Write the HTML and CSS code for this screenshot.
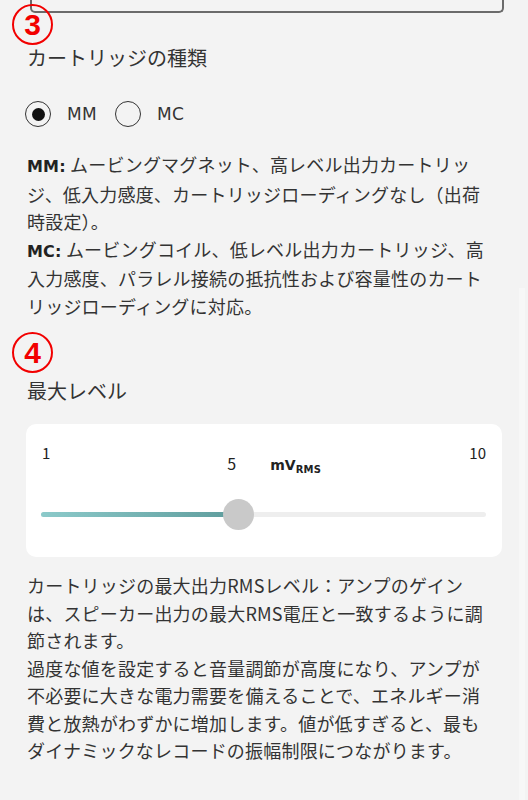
FILE: index.html
```html
<!DOCTYPE html>
<html lang="ja">
<head>
<meta charset="utf-8">
<link rel="stylesheet" href="styles.css">
</head>
<body>
<div class="page">
  <div class="top-box"></div>
  <span class="badge badge-3">3</span>

  <h2 class="heading h-type">カートリッジの種類</h2>
  <div class="radios">
    <label class="radio"><span class="dot checked"></span><span class="radio-label">MM</span></label>
    <label class="radio"><span class="dot"></span><span class="radio-label">MC</span></label>
  </div>
  <p class="para p1"><b>MM:</b> ムービングマグネット、高レベル出力カートリッ<br>ジ、低入力感度、カートリッジローディングなし（出荷<br>時設定）。<br><b>MC:</b> ムービングコイル、低レベル出力カートリッジ、高<br>入力感度、パラレル接続の抵抗性および容量性のカート<br>リッジローディングに対応。</p>

  <div class="sec4">
    <span class="badge badge-4">4</span>
    <h2 class="heading h-level">最大レベル</h2>
  </div>
  <div class="card">
    <div class="labels">
      <span class="min">1</span>
      <span class="value"><span class="num">5</span><span class="unit">mV<sub>RMS</sub></span></span>
      <span class="max">10</span>
    </div>
    <div class="slider">
      <div class="track">
        <div class="fill" style="width:44.4%"></div>
        <div class="thumb" style="left:44.4%"></div>
      </div>
    </div>
  </div>
  <p class="para p2">カートリッジの最大出力RMSレベル：アンプのゲイン<br>は、スピーカー出力の最大RMS電圧と一致するように調<br>節されます。<br>過度な値を設定すると音量調節が高度になり、アンプが<br>不必要に大きな電力需要を備えることで、エネルギー消<br>費と放熱がわずかに増加します。値が低すぎると、最も<br>ダイナミックなレコードの振幅制限につながります。</p>
  <div class="scroll-strip"></div>
</div>
</body>
</html>
```

FILE: styles.css
```css
html, body {
  margin: 0;
  padding: 0;
  background: #f3f3f3;
}
body {
  font-family: "Noto Sans CJK JP", "Noto Sans", sans-serif;
  color: #333;
  width: 528px;
  height: 800px;
  overflow: hidden;
}
.page {
  position: relative;
  padding: 0 26px 0 27px;
}
.top-box {
  margin-left: 3px;
  margin-right: -2px;
  height: 11px;
  border: 2px solid #6b6b6b;
  border-top: none;
  border-radius: 0 0 5px 5px;
}
.badge {
  position: absolute;
  left: 12px;
  width: 37px;
  height: 37px;
  border: 2.5px solid #f20000;
  border-radius: 50%;
  color: #f20000;
  font-family: "Liberation Sans", Arial, sans-serif;
  font-weight: bold;
  font-size: 30px;
  line-height: 37px;
  text-align: center;
}
.badge-3 { top: 4px; }
.badge-4 { top: -45px; left: -15px; }
.heading {
  margin: 0;
  font-size: 20px;
  font-weight: normal;
  line-height: 28px;
  color: #333;
}
.h-type { margin-top: 31px; }
.radios {
  display: flex;
  align-items: center;
  margin-top: 28px;
  height: 28px;
}
.radio {
  display: flex;
  align-items: center;
}
.radio + .radio { margin-left: 20px; }
.dot {
  border: 1.6px solid #333;
  border-radius: 50%;
  box-sizing: border-box;
  position: relative;
  margin-left: -2px;
  width: 26px;
  height: 26px;
}
.dot.checked::after {
  content: "";
  position: absolute;
  left: 50%;
  top: 50%;
  width: 13px;
  height: 13px;
  margin: -6.5px 0 0 -6.5px;
  border-radius: 50%;
  background: #111;
}
.radio-label {
  margin-left: 16px;
  font-family: "DejaVu Sans", sans-serif;
  font-size: 17px;
  color: #333;
  letter-spacing: 0.3px;
}
.para {
  margin: 0;
  font-size: 18px;
  line-height: 27.5px;
  color: #333;
  letter-spacing: 0.2px;
}
.para b {
  font-family: "DejaVu Sans", sans-serif;
  font-weight: bold;
  font-size: 16px;
  color: #222;
}
.p1 { margin-top: 23px; }
.sec4 {
  position: relative;
  margin-top: 57px;
}
.card {
  margin-top: 19px;
  margin-left: -1px;
  background: #fff;
  border-radius: 10px;
  padding: 18px 16px 27px 15px;
}
.labels {
  display: flex;
  align-items: flex-start;
  font-size: 15px;
  line-height: 22px;
  color: #222;
}
.min { margin-left: 1px; }
.value {
  display: flex;
  align-items: baseline;
  margin-left: 177px;
  margin-top: 10px;
}
.num {
  font-size: 16px;
}
.unit {
  margin-left: 34px;
  font-family: "DejaVu Sans", sans-serif;
  font-weight: bold;
  font-size: 14px;
}
.unit sub {
  font-size: 10px;
  vertical-align: -3px;
  letter-spacing: 0.2px;
}
.max { margin-left: auto; }
.slider {
  margin-top: 18px;
  height: 31px;
  display: flex;
  align-items: center;
}
.track {
  position: relative;
  width: 100%;
  height: 5px;
  border-radius: 3px;
  background: #eeeeee;
}
.fill {
  height: 100%;
  border-radius: 3px 0 0 3px;
  background: linear-gradient(90deg, #8ccaca, #5e9c9c);
}
.thumb {
  position: absolute;
  top: 50%;
  width: 31px;
  height: 31px;
  margin: -15.5px 0 0 -15.5px;
  border-radius: 50%;
  background: #c9c9c9;
}
.p2 {
  margin-top: 15px;
}
.scroll-strip {
  position: absolute;
  left: 519px;
  top: 288px;
  width: 6px;
  height: 600px;
  background: #f7f7f7;
}
```
